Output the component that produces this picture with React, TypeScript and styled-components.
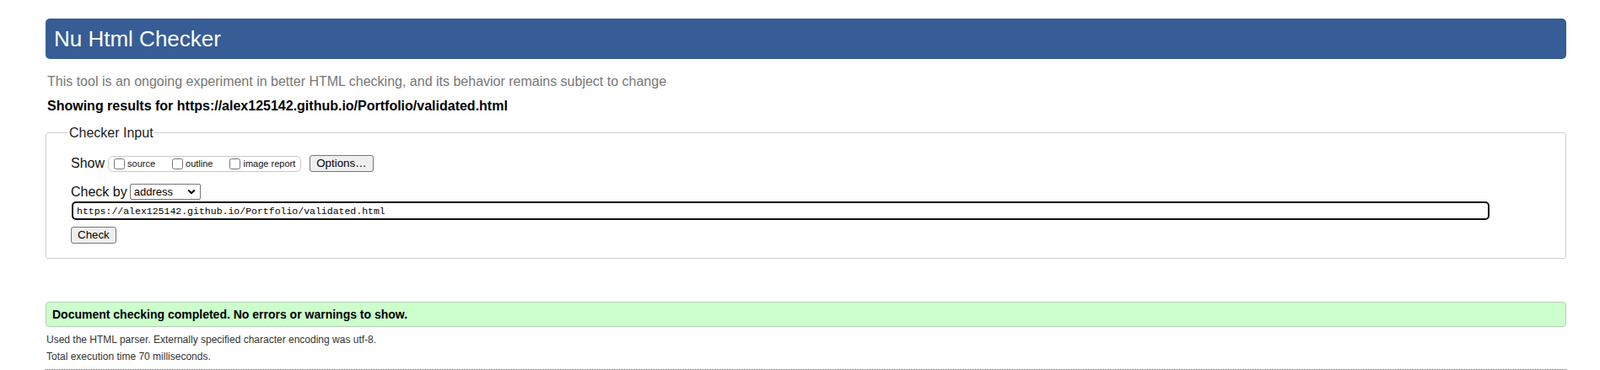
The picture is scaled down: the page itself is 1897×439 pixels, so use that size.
import React from "react";
import styled, { createGlobalStyle } from "styled-components";

const GlobalStyle = createGlobalStyle`
    html, body {
        margin: 0;
        padding: 0;
        overflow: hidden;
        background: #fff;
    }

    body {
        font-family: Arial, "Liberation Sans", sans-serif;
        color: #000;
    }
`;

const showOptions = ["source", "outline", "image report"];

function App() {
    return (
        <>
            <GlobalStyle />
            <Page>
                <Title>Nu Html Checker</Title>
                <Tagline>
                    This tool is an ongoing experiment in better HTML checking, and its behavior
                    remains subject to change
                </Tagline>
                <ResultsFor>
                    Showing results for https://alex125142.github.io/Portfolio/validated.html
                </ResultsFor>

                <InputFieldset>
                    <Legend>Checker Input</Legend>
                    <ShowRow>
                        <RowLabel>Show</RowLabel>
                        <CheckboxGroup>
                            {showOptions.map((option, i) => (
                                <CheckboxLabel key={option} $last={i === showOptions.length - 1}>
                                    <Checkbox type="checkbox" />
                                    {option}
                                </CheckboxLabel>
                            ))}
                        </CheckboxGroup>
                        <Button $spaced>Options…</Button>
                    </ShowRow>
                    <CheckByRow>
                        <RowLabel>Check by</RowLabel>
                        <SelectWrapper>
                            <Select defaultValue="address">
                                <option value="address">address</option>
                                <option value="file">file upload</option>
                                <option value="text">text input</option>
                            </Select>
                            <Chevron width="10" height="7" viewBox="0 0 10 7">
                                <polyline
                                    points="1.2,1.5 5,5.2 8.8,1.5"
                                    fill="none"
                                    stroke="#000"
                                    strokeWidth="2"
                                />
                            </Chevron>
                        </SelectWrapper>
                    </CheckByRow>
                    <UrlInput
                        type="url"
                        defaultValue="https://alex125142.github.io/Portfolio/validated.html"
                    />
                    <CheckButton>Check</CheckButton>
                </InputFieldset>

                <SuccessBox>Document checking completed. No errors or warnings to show.</SuccessBox>
                <Details $gap={8}>
                    Used the HTML parser. Externally specified character encoding was utf-8.
                </Details>
                <Details $gap={6}>Total execution time 70 milliseconds.</Details>
                <DottedRule />
            </Page>
        </>
    );
}

const Page = styled.div`
    padding: 22px 40px 0 54px;
`;

const Title = styled.h1`
    margin: 0;
    height: 48px;
    padding: 0 10px;
    background: #365d95;
    border-radius: 5px;
    color: #fff;
    font-size: 26px;
    font-weight: normal;
    line-height: 48px;
`;

const Tagline = styled.p`
    margin: 18px 0 0 2px;
    color: #777;
    font-size: 16px;
    line-height: 18px;
`;

const ResultsFor = styled.p`
    margin: 11px 0 0 2px;
    font-size: 16px;
    font-weight: bold;
    line-height: 18px;
`;

const InputFieldset = styled.fieldset`
    margin: 13px 0 0 0;
    padding: 17px 0 17px 29px;
    border: 1px solid #cfcfcf;
    border-radius: 3px;
    min-width: 0;
`;

const Legend = styled.legend`
    margin-left: -3px;
    padding: 0 1px;
    font-size: 16px;
    line-height: 19px;
    color: #222;
`;

const ShowRow = styled.div`
    display: flex;
    align-items: center;
    height: 20px;
`;

const CheckByRow = styled(ShowRow)`
    margin-top: 14px;
    height: 19px;
`;

const RowLabel = styled.span`
    font-size: 16px;
    line-height: 16px;
    color: #111;
`;

const CheckboxGroup = styled.div`
    display: inline-flex;
    align-items: center;
    box-sizing: border-box;
    height: 19px;
    margin-left: 4px;
    padding: 0 6px 0 2px;
    border: 1px solid #c8c8c8;
    border-radius: 6px;
`;

const CheckboxLabel = styled.label<{ $last?: boolean }>`
    display: inline-flex;
    align-items: center;
    margin-right: ${(p) => (p.$last ? 0 : 16)}px;
    font-size: 11px;
    line-height: 13px;
    color: #111;
`;

const Checkbox = styled.input`
    width: 13px;
    height: 13px;
    margin: 0 3px 0 4px;
`;

const Button = styled.button<{ $spaced?: boolean }>`
    box-sizing: border-box;
    height: 20px;
    margin-left: ${(p) => (p.$spaced ? 10 : 0)}px;
    padding: 0 7px;
    background: #efefef;
    border: 1px solid #767676;
    border-radius: 3px;
    color: #000;
    font-family: Arial, "Liberation Sans", sans-serif;
    font-size: 13.33px;
    line-height: 18px;
`;

const CheckButton = styled(Button)`
    display: block;
    margin-top: 8px;
`;

const SelectWrapper = styled.div`
    position: relative;
    margin-left: 3px;
`;

const Select = styled.select`
    appearance: none;
    box-sizing: border-box;
    display: block;
    width: 84px;
    height: 19px;
    padding: 0 0 0 4px;
    background: #fff;
    border: 1px solid #767676;
    border-radius: 2px;
    color: #000;
    font-family: Arial, "Liberation Sans", sans-serif;
    font-size: 13px;
`;

const Chevron = styled.svg`
    position: absolute;
    top: 6px;
    right: 6px;
    pointer-events: none;
`;

const UrlInput = styled.input`
    display: block;
    box-sizing: border-box;
    width: 1681px;
    height: 22px;
    margin: 2px 0 0 1px;
    padding: 0 4px;
    border: 2px solid #111;
    border-radius: 5px;
    color: #000;
    font-family: "Liberation Mono", monospace;
    font-size: 11.5px;
    outline: none;
`;

const SuccessBox = styled.p`
    box-sizing: border-box;
    height: 30px;
    margin: 51px 0 0 0;
    padding: 0 7px;
    background: #ccffcc;
    border: 1px solid #b8cbb8;
    border-radius: 4px;
    font-size: 14px;
    font-weight: bold;
    line-height: 28px;
`;

const Details = styled.p<{ $gap?: number }>`
    margin: ${(p) => p.$gap ?? 5}px 0 0 1px;
    color: #333;
    font-size: 12px;
    line-height: 14px;
`;

const DottedRule = styled.hr`
    margin: 8px 0 0 0;
    border: 0;
    border-top: 1px dotted #555;
`;

export default App;
